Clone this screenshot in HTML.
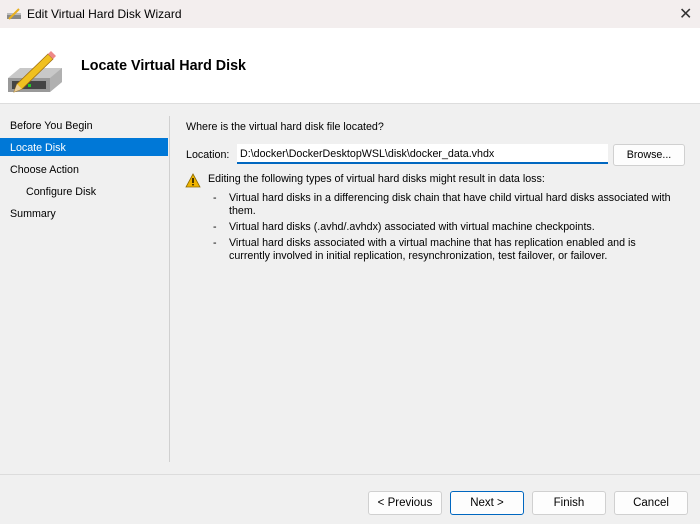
<!DOCTYPE html>
<html><head><style>
body{margin:0;width:700px;height:524px;background:#f0f0f0;font-family:"Liberation Sans",sans-serif;font-size:10.7px;color:#000;position:relative;overflow:hidden}
.a{position:absolute;white-space:nowrap}
.btn{position:absolute;top:491px;width:72px;height:22px;border:1px solid #d0d0d0;border-radius:3px;background:#fdfdfd;text-align:center;line-height:22px;font-size:11.5px}
</style></head><body>
<div class="a" style="left:0;top:0;width:700px;height:28px;background:#f3eeee"></div>
<svg class="a" style="left:6px;top:7px" width="16" height="14"><rect x="1" y="6" width="14" height="6" fill="#888"/><rect x="1" y="6" width="14" height="2" fill="#bbb"/><line x1="3" y1="12" x2="13" y2="2" stroke="#e8b020" stroke-width="2"/></svg>
<div class="a" style="left:27px;top:7px;font-size:12px">Edit Virtual Hard Disk Wizard</div>
<div class="a" style="left:679px;top:4px;font-size:16px;color:#333">✕</div>
<div class="a" style="left:0;top:28px;width:700px;height:75px;background:#fff;border-bottom:1px solid #ddd"></div>
<svg class="a" style="left:4px;top:48px" width="60" height="48">
<path d="M4 30 L16 20 L58 20 L58 34 L46 44 L4 44 Z" fill="#c8c8c8"/>
<path d="M4 30 L46 30 L46 44 L4 44 Z" fill="#999"/>
<path d="M46 30 L58 20 L58 34 L46 44 Z" fill="#b0b0b0"/>
<rect x="8" y="33" width="34" height="8" fill="#444"/>
<rect x="24" y="36" width="3" height="3" fill="#2c2"/>
<path d="M10 44 L13 36 L44 6 L49 11 L18 41 Z" fill="#f0c020" stroke="#a07010" stroke-width="0.8"/>
<path d="M44 6 L47 3 L52 8 L49 11 Z" fill="#e88"/>
<path d="M10 44 L13 36 L18 41 Z" fill="#e9d0a0"/>
</svg>
<div class="a" style="left:81px;top:58px;font-size:14.3px;font-weight:bold">Locate Virtual Hard Disk</div>
<div class="a" style="left:10px;top:120px">Before You Begin</div>
<div class="a" style="left:0;top:138px;width:168px;height:18px;background:#0078d7"></div>
<div class="a" style="left:10px;top:142px;color:#fff">Locate Disk</div>
<div class="a" style="left:10px;top:164px">Choose Action</div>
<div class="a" style="left:26px;top:186px">Configure Disk</div>
<div class="a" style="left:10px;top:208px">Summary</div>
<div class="a" style="left:169px;top:116px;width:1px;height:346px;background:#d0d0d0"></div>
<div class="a" style="left:186px;top:121px">Where is the virtual hard disk file located?</div>
<div class="a" style="left:186px;top:149px">Location:</div>
<div class="a" style="left:237px;top:144px;width:371px;height:18px;background:#fff;border-bottom:2px solid #0067c0"></div>
<div class="a" style="left:240px;top:148px">D:\docker\DockerDesktopWSL\disk\docker_data.vhdx</div>
<div class="a" style="left:613px;top:144px;width:70px;height:20px;border:1px solid #d0d0d0;border-radius:3px;background:#fdfdfd;text-align:center;line-height:20px">Browse...</div>
<svg class="a" style="left:185px;top:173px" width="16" height="15"><path d="M8 1 L15 14 L1 14 Z" fill="#f0b400" stroke="#8a6a00" stroke-width="0.8"/><rect x="7.3" y="5" width="1.4" height="5" fill="#000"/><rect x="7.3" y="11" width="1.4" height="1.4" fill="#000"/></svg>
<div class="a" style="left:208px;top:173px">Editing the following types of virtual hard disks might result in data loss:</div>
<div class="a" style="left:213px;top:192px">-</div>
<div class="a" style="left:229px;top:192px;line-height:13px">Virtual hard disks in a differencing disk chain that have child virtual hard disks associated with<br>them.</div>
<div class="a" style="left:213px;top:221px">-</div>
<div class="a" style="left:229px;top:221px">Virtual hard disks (.avhd/.avhdx) associated with virtual machine checkpoints.</div>
<div class="a" style="left:213px;top:237px">-</div>
<div class="a" style="left:229px;top:237px;line-height:13px">Virtual hard disks associated with a virtual machine that has replication enabled and is<br>currently involved in initial replication, resynchronization, test failover, or failover.</div>
<div class="a" style="left:0;top:474px;width:700px;height:1px;background:#dcdcdc"></div>
<div class="btn" style="left:368px">&lt; Previous</div>
<div class="btn" style="left:450px;border-color:#0067c0">Next &gt;</div>
<div class="btn" style="left:532px">Finish</div>
<div class="btn" style="left:614px">Cancel</div>
</body></html>
